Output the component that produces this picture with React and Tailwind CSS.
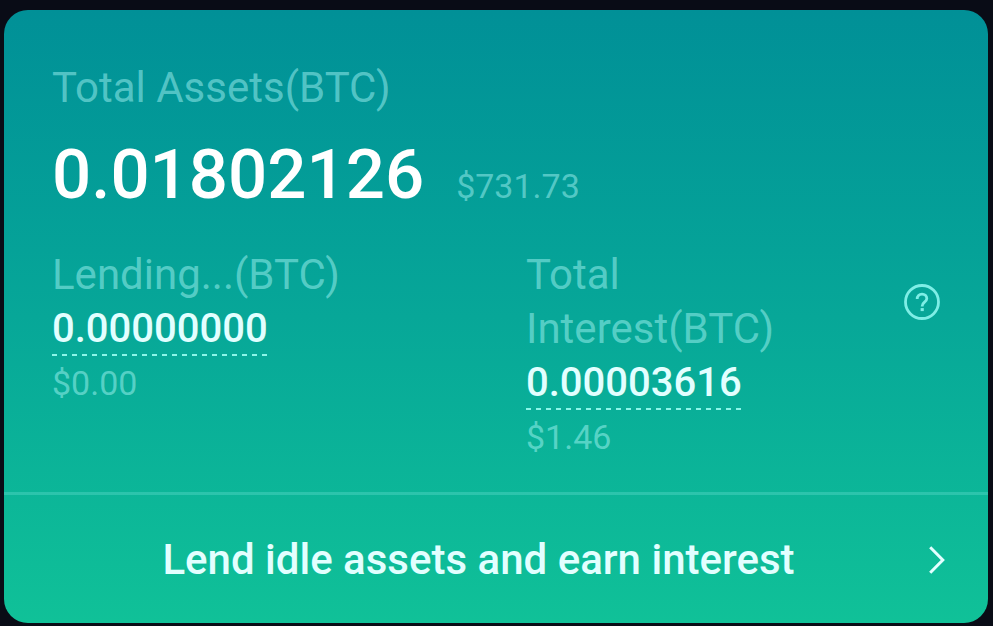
const ASSETS = { total: "0.01802126", usd: "$731.73" }

const STATS = [
  { label: "Lending...(BTC)", value: "0.00000000", usd: "$0.00", help: false },
  { label: "Total Interest(BTC)", value: "0.00003616", usd: "$1.46", help: true },
]

function HelpIcon() {
  return (
    <svg viewBox="0 0 36 36" className="h-9 w-9" fill="none" stroke="currentColor" strokeWidth="2.8" aria-hidden="true">
      <circle cx="18" cy="18" r="16.5" />
      <path d="M13.2 15c0-3 2-4.9 4.8-4.9s4.8 1.8 4.8 4.4c0 3.6-4.6 3.8-4.6 7.4v.6" />
      <path d="M16.6 25.6h3.2" strokeWidth="3" />
    </svg>
  )
}

function Chevron() {
  return (
    <svg viewBox="0 0 16 28" className="h-7 w-4 shrink-0" fill="none" stroke="currentColor" strokeWidth="3" aria-hidden="true">
      <path d="M1.2 1.2 13.8 14 1.2 26.8" />
    </svg>
  )
}

function Stat({ label, value, usd, help }) {
  return (
    <div>
      <div className="flex items-center justify-between gap-10">
        <h3 className="text-[42px] leading-[54px] text-[#b8ffff]/45">{label}</h3>
        {help && (
          <button type="button" aria-label="Help" className="shrink-0 cursor-pointer text-[#7eeee6]">
            <HelpIcon />
          </button>
        )}
      </div>
      <p className="w-fit bg-[repeating-linear-gradient(90deg,#8cf5e8_0_5px,transparent_5px_10px)] bg-[length:100%_2px] bg-bottom bg-no-repeat text-[40px] font-medium leading-[54px] text-[#e2ffff]">
        {value}
      </p>
      <p className="text-[34px] leading-[54px] text-[#b8ffff]/45">{usd}</p>
    </div>
  )
}

export default function App() {
  return (
    <div className="min-h-screen bg-[#090c16] pt-[10px] pr-[5px] pb-[3px] pl-1 font-[Roboto,sans-serif]">
      <main className="overflow-hidden rounded-3xl bg-linear-to-b from-[#019097] via-[#07a798] to-[#10c198]">
        <section className="px-12 pt-[51px] pb-7">
          <h2 className="text-[42px] leading-[54px] text-[#b8ffff]/45">Total Assets(BTC)</h2>
          <div className="mt-6 flex items-baseline gap-8">
            <p className="text-[69px] font-medium leading-[72px] text-white">{ASSETS.total}</p>
            <p className="text-[34px] leading-[54px] text-[#b8ffff]/45">{ASSETS.usd}</p>
          </div>

          <div className="mt-[35px] grid grid-cols-2 gap-[60px]">
            {STATS.map((stat) => (
              <Stat key={stat.label} {...stat} />
            ))}
          </div>
        </section>

        <a
          href="#lend"
          className="flex items-center border-t-[3px] border-[#b0ffff]/20 pt-[38px] pr-[43px] pb-9 pl-6 text-[#e2ffff]"
        >
          <span className="flex-1 text-center text-[42px] font-medium leading-[54px]">
            Lend idle assets and earn interest
          </span>
          <Chevron />
        </a>
      </main>
    </div>
  )
}
